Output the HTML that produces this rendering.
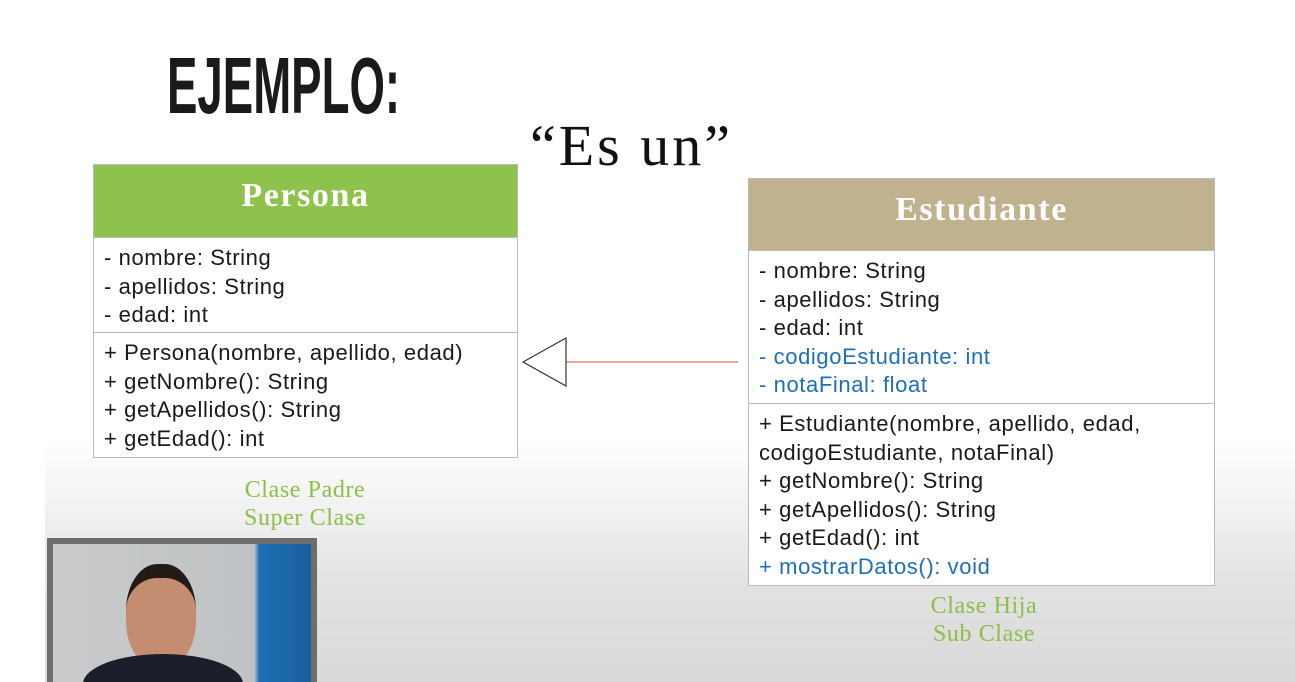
<!DOCTYPE html>
<html><head><style>
body{margin:0;width:1295px;height:682px;overflow:hidden;position:relative;background:#fff;font-family:"Liberation Sans",sans-serif;}
.bg{position:absolute;left:45px;top:440px;width:1250px;height:242px;background:linear-gradient(#fff,#e2e2e2 60%,#d9d9d9);}
.t{position:absolute;left:167px;top:46px;font:bold 80px/1 "Liberation Sans Narrow","Liberation Sans",sans-serif;transform:scaleX(.57);transform-origin:left;color:#1a1a1a;}
.q{position:absolute;left:530px;top:114px;font:58px/1.1 "Liberation Serif",serif;color:#111;letter-spacing:3px;}
.box{position:absolute;border:1px solid #bbb;background:#fff;color:#1a1a1a;font-size:22px;line-height:28.5px;letter-spacing:0.6px;}
.h{color:#fff;font:bold 34px "Liberation Serif",serif;letter-spacing:1.6px;text-align:center;}
.sec{padding:6px 10px;border-top:1px solid #bbb;}
.b{color:#1f6fb8;}
.lbl{position:absolute;color:#8cbf4a;font:24px/28px "Liberation Serif",serif;letter-spacing:0.6px;text-align:center;}
</style></head><body>
<div class="bg"></div>
<div class="t">EJEMPLO:</div>
<div class="q">“Es un”</div>
<div class="box" style="left:93px;top:164px;width:423px;height:292px;">
<div class="h" style="background:#8fc24c;height:72px;line-height:62px;">Persona</div>
<div class="sec" style="height:82px;">- nombre: String<br>- apellidos: String<br>- edad: int</div>
<div class="sec">+ Persona(nombre, apellido, edad)<br>+ getNombre(): String<br>+ getApellidos(): String<br>+ getEdad(): int</div>
</div>
<div class="box" style="left:748px;top:178px;width:465px;height:406px;">
<div class="h" style="background:#c0b18f;height:71px;line-height:61px;">Estudiante</div>
<div class="sec" style="height:140px;">- nombre: String<br>- apellidos: String<br>- edad: int<br><span class="b">- codigoEstudiante: int<br>- notaFinal: float</span></div>
<div class="sec">+ Estudiante(nombre, apellido, edad,<br>codigoEstudiante, notaFinal)<br>+ getNombre(): String<br>+ getApellidos(): String<br>+ getEdad(): int<br><span class="b">+ mostrarDatos(): void</span></div>
</div>
<svg style="position:absolute;left:0;top:0" width="1295" height="682">
<line x1="566" y1="362" x2="738" y2="362" stroke="#e07a5f" stroke-width="1.2"/>
<polygon points="523,362 566,338 566,386" fill="#fff" stroke="#333" stroke-width="1.2"/>
</svg>
<div class="lbl" style="left:195px;top:476px;width:220px;">Clase Padre<br>Super Clase</div>
<div class="lbl" style="left:874px;top:592px;width:220px;">Clase Hija<br>Sub Clase</div>
<div style="position:absolute;left:47px;top:538px;width:270px;height:144px;background:#6e6e6e;">
<div style="position:absolute;left:6px;top:6px;width:258px;height:138px;background:linear-gradient(90deg,#c9cbcc,#bfc2c4 78%,#1d6fb5 80%,#1b5f9d);overflow:hidden;">
<div style="position:absolute;left:73px;top:20px;width:70px;height:90px;border-radius:45%;background:#c48d72;border-top:14px solid #231a17;"></div>
<div style="position:absolute;left:30px;top:110px;width:160px;height:60px;border-radius:50% 50% 0 0;background:#1c1f2b;"></div>
</div></div>
</body></html>
